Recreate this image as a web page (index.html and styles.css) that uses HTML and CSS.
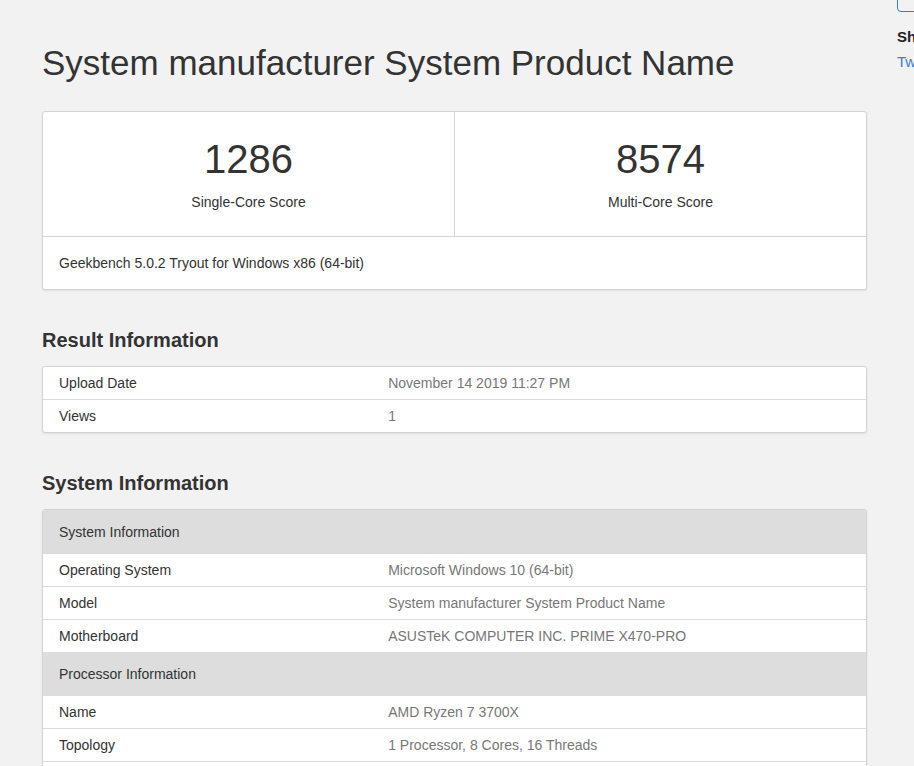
FILE: index.html
```
<!DOCTYPE html>
<html lang="en">
<head>
<meta charset="utf-8">
<title>System manufacturer System Product Name - Geekbench</title>
<link rel="stylesheet" href="styles.css">
</head>
<body>
<div class="page">
  <main class="main">
    <h1 class="title">System manufacturer System Product Name</h1>

    <section class="card scores">
      <div class="score-row">
        <div class="score">
          <div class="score-value">1286</div>
          <div class="score-label">Single-Core Score</div>
        </div>
        <div class="score">
          <div class="score-value">8574</div>
          <div class="score-label">Multi-Core Score</div>
        </div>
      </div>
      <div class="score-footer">Geekbench 5.0.2 Tryout for Windows x86 (64-bit)</div>
    </section>

    <h3 class="section-title">Result Information</h3>
    <div class="card">
      <table class="info">
        <colgroup><col class="col-name"><col></colgroup>
        <tr><td class="name">Upload Date</td><td class="value">November 14 2019 11:27 PM</td></tr>
        <tr><td class="name">Views</td><td class="value">1</td></tr>
      </table>
    </div>

    <h3 class="section-title">System Information</h3>
    <div class="card">
      <table class="info">
        <colgroup><col class="col-name"><col></colgroup>
        <tr class="head"><td colspan="2">System Information</td></tr>
        <tr><td class="name">Operating System</td><td class="value">Microsoft Windows 10 (64-bit)</td></tr>
        <tr><td class="name">Model</td><td class="value">System manufacturer System Product Name</td></tr>
        <tr><td class="name">Motherboard</td><td class="value">ASUSTeK COMPUTER INC. PRIME X470-PRO</td></tr>
        <tr class="head"><td colspan="2">Processor Information</td></tr>
        <tr><td class="name">Name</td><td class="value">AMD Ryzen 7 3700X</td></tr>
        <tr><td class="name">Topology</td><td class="value">1 Processor, 8 Cores, 16 Threads</td></tr>
        <tr><td class="name">Identifier</td><td class="value">AuthenticAMD Family 23 Model 113 Stepping 0</td></tr>
      </table>
    </div>
  </main>

  <aside class="sidebar">
    <div class="side-button"></div>
    <h4 class="side-title">Share</h4>
    <a class="side-link" href="#">Twitter</a>
  </aside>
</div>
</body>
</html>
```

FILE: styles.css
```
html, body {
  margin: 0;
  padding: 0;
}
body {
  background: #f2f2f2;
  font-family: "Liberation Sans", Arial, sans-serif;
  font-size: 14px;
  line-height: 20px;
  color: #333;
  overflow: hidden;
}
.page {
  display: flex;
  padding-left: 42px;
  gap: 30px;
}
.main {
  width: 825px;
  flex: none;
}
.title {
  margin: 43px 0 28px;
  font-size: 35px;
  font-weight: normal;
  line-height: 40px;
  color: #333;
}
.card {
  background: #fff;
  border: 1px solid #d3d3d3;
  border-radius: 3px;
  box-shadow: 0 1px 2px rgba(0, 0, 0, 0.08);
  overflow: hidden;
}
.score-row {
  display: flex;
  border-bottom: 1px solid #d6d6d6;
}
.score {
  flex: 1;
  text-align: center;
  padding: 25px 0 24px;
}
.score + .score {
  border-left: 1px solid #d6d6d6;
}
.score-value {
  font-size: 40px;
  line-height: 44px;
  color: #333;
}
.score-label {
  margin-top: 11px;
  line-height: 20px;
}
.score-footer {
  padding: 16px;
}
.section-title {
  margin: 39px 0 15px;
  font-size: 20px;
  font-weight: bold;
  line-height: 22px;
  color: #333;
}
.info {
  width: 100%;
  border-collapse: collapse;
  table-layout: fixed;
}
.col-name {
  width: 40%;
}
.info td {
  padding: 6px 16px;
  border-bottom: 1px solid #dcdcdc;
  line-height: 20px;
  vertical-align: top;
}
.info tr:last-child td,
.info tr:has(+ .head) td {
  border-bottom: none;
}
.info .name {
  color: #333;
}
.info .value {
  color: #777;
}
.info .head td {
  background: #dddddd;
  padding: 12px 16px;
  border-bottom: none;
  color: #333;
}
.sidebar {
  flex: 1;
  min-width: 0;
  white-space: nowrap;
}
.side-button {
  height: 30px;
  margin-top: -20px;
  border: 1px solid #3b7cc0;
  border-radius: 4px;
  width: 200px;
}
.side-title {
  margin: 15px 0 0;
  font-size: 15px;
  font-weight: bold;
  line-height: 20px;
  color: #222;
}
.side-link {
  display: block;
  margin-top: 5px;
  font-size: 15px;
  line-height: 20px;
  color: #3d80c8;
  text-decoration: none;
}
```
